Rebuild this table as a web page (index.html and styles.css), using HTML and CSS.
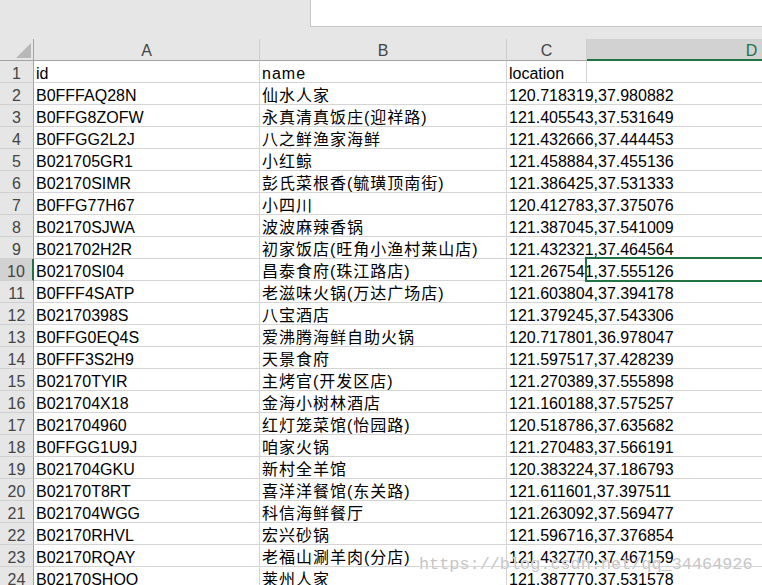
FILE: index.html
```html
<!DOCTYPE html>
<html lang="zh-CN">
<head>
<meta charset="utf-8">
<title>Sheet</title>
<link rel="stylesheet" href="styles.css">
</head>
<body>
<div class="topbar"><div class="formula"></div></div>
<div class="sheet">
  <div class="ch corner"><svg width="15" height="15" viewBox="0 0 15 15"><polygon points="15,0 15,15 0,15" fill="#b8b8b8"/></svg></div>
  <div class="ch">A</div><div class="ch">B</div><div class="ch">C</div><div class="ch sel">D</div>

  <div class="rh">1</div><div class="c">id</div><div class="c n">name</div><div class="c l first">location</div><div class="c d"></div>
  <div class="rh">2</div><div class="c">B0FFFAQ28N</div><div class="c n">仙水人家</div><div class="c l">120.718319,37.980882</div><div class="c d"></div>
  <div class="rh">3</div><div class="c">B0FFG8ZOFW</div><div class="c n">永真清真饭庄(迎祥路)</div><div class="c l">121.405543,37.531649</div><div class="c d"></div>
  <div class="rh">4</div><div class="c">B0FFGG2L2J</div><div class="c n">八之鲜渔家海鲜</div><div class="c l">121.432666,37.444453</div><div class="c d"></div>
  <div class="rh">5</div><div class="c">B021705GR1</div><div class="c n">小红鲸</div><div class="c l">121.458884,37.455136</div><div class="c d"></div>
  <div class="rh">6</div><div class="c">B02170SIMR</div><div class="c n">彭氏菜根香(毓璜顶南街)</div><div class="c l">121.386425,37.531333</div><div class="c d"></div>
  <div class="rh">7</div><div class="c">B0FFG77H67</div><div class="c n">小四川</div><div class="c l">120.412783,37.375076</div><div class="c d"></div>
  <div class="rh">8</div><div class="c">B02170SJWA</div><div class="c n">波波麻辣香锅</div><div class="c l">121.387045,37.541009</div><div class="c d"></div>
  <div class="rh">9</div><div class="c">B021702H2R</div><div class="c n">初家饭店(旺角小渔村莱山店)</div><div class="c l">121.432321,37.464564</div><div class="c d"></div>
  <div class="rh sel">10</div><div class="c">B02170SI04</div><div class="c n">昌泰食府(珠江路店)</div><div class="c l">121.267541,37.555126</div><div class="c d"></div>
  <div class="rh">11</div><div class="c">B0FFF4SATP</div><div class="c n">老滋味火锅(万达广场店)</div><div class="c l">121.603804,37.394178</div><div class="c d"></div>
  <div class="rh">12</div><div class="c">B02170398S</div><div class="c n">八宝酒店</div><div class="c l">121.379245,37.543306</div><div class="c d"></div>
  <div class="rh">13</div><div class="c">B0FFG0EQ4S</div><div class="c n">爱沸腾海鲜自助火锅</div><div class="c l">120.717801,36.978047</div><div class="c d"></div>
  <div class="rh">14</div><div class="c">B0FFF3S2H9</div><div class="c n">天景食府</div><div class="c l">121.597517,37.428239</div><div class="c d"></div>
  <div class="rh">15</div><div class="c">B02170TYIR</div><div class="c n">主烤官(开发区店)</div><div class="c l">121.270389,37.555898</div><div class="c d"></div>
  <div class="rh">16</div><div class="c">B021704X18</div><div class="c n">金海小树林酒店</div><div class="c l">121.160188,37.575257</div><div class="c d"></div>
  <div class="rh">17</div><div class="c">B021704960</div><div class="c n">红灯笼菜馆(怡园路)</div><div class="c l">120.518786,37.635682</div><div class="c d"></div>
  <div class="rh">18</div><div class="c">B0FFGG1U9J</div><div class="c n">咱家火锅</div><div class="c l">121.270483,37.566191</div><div class="c d"></div>
  <div class="rh">19</div><div class="c">B021704GKU</div><div class="c n">新村全羊馆</div><div class="c l">120.383224,37.186793</div><div class="c d"></div>
  <div class="rh">20</div><div class="c">B02170T8RT</div><div class="c n">喜洋洋餐馆(东关路)</div><div class="c l">121.611601,37.397511</div><div class="c d"></div>
  <div class="rh">21</div><div class="c">B021704WGG</div><div class="c n">科信海鲜餐厅</div><div class="c l">121.263092,37.569477</div><div class="c d"></div>
  <div class="rh">22</div><div class="c">B02170RHVL</div><div class="c n">宏兴砂锅</div><div class="c l">121.596716,37.376854</div><div class="c d"></div>
  <div class="rh">23</div><div class="c">B02170RQAY</div><div class="c n">老福山涮羊肉(分店)</div><div class="c l">121.432770,37.467159</div><div class="c d"></div>
  <div class="rh">24</div><div class="c">B02170SHOO</div><div class="c n">莱州人家</div><div class="c l">121.387770,37.531578</div><div class="c d"></div>
</div>
<div class="selection"></div>
<div class="watermark">https://blog.csdn.net/qq_34464926</div>
</body>
</html>
```
FILE: styles.css
```css
* { box-sizing: border-box; }
html, body { margin: 0; padding: 0; }
body {
  width: 762px;
  height: 585px;
  overflow: hidden;
  position: relative;
  background: #fff;
  font-family: "Liberation Sans", "Noto Sans CJK SC", sans-serif;
  font-size: 16px;
  color: #000;
}
.topbar {
  height: 39px;
  background: #e6e6e6;
}
.formula {
  margin-left: 310px;
  height: 27px;
  background: #fff;
  border-left: 1px solid #c6c6c6;
  border-bottom: 1px solid #c6c6c6;
}
.sheet {
  display: grid;
  grid-template-columns: 34px 226px 247px 80px 330px;
  grid-auto-rows: 22px;
  width: 917px;
}
.ch {
  background: #e6e6e6;
  border-right: 1px solid #cdcdcd;
  border-bottom: 1px solid #a3a3a3;
  text-align: center;
  color: #444;
  line-height: 19px;
  padding-top: 2px;
}
.ch.corner {
  display: flex;
  align-items: flex-end;
  justify-content: flex-end;
  padding: 0 2px 2px 0;
  border-right: 1px solid #a3a3a3;
}
.ch.corner svg { display: block; }
.ch.sel {
  background: #d2d2d2;
  color: #217346;
  border-bottom: 2px solid #217346;
}
.rh {
  background: #e6e6e6;
  border-right: 1px solid #a3a3a3;
  border-bottom: 1px solid #d0d0d0;
  text-align: center;
  color: #444;
  line-height: 19px;
  padding-top: 3px;
}
.rh.sel {
  background: #d2d2d2;
  border-right: 2px solid #217346;
}
.c {
  border-right: 1px solid #d4d4d4;
  border-bottom: 1px solid #d4d4d4;
  line-height: 19px;
  padding: 3px 0 0 2px;
  white-space: nowrap;
  overflow: visible;
}
.c.n { letter-spacing: 1px; }
.c.l { border-right: none; }
.c.l.first { border-right: 1px solid #d4d4d4; }
.c.d { border-right: none; }
.selection {
  position: absolute;
  left: 585px;
  top: 257px;
  width: 200px;
  height: 25px;
  border: 2px solid #217346;
}
.watermark {
  position: absolute;
  left: 419px;
  top: 554px;
  font-family: "Liberation Mono", monospace;
  font-size: 16.85px;
  line-height: 22px;
  color: #c6c6c6;
  text-shadow: 0 0 1px #fff, 0 0 1px #fff;
  white-space: nowrap;
}
```
